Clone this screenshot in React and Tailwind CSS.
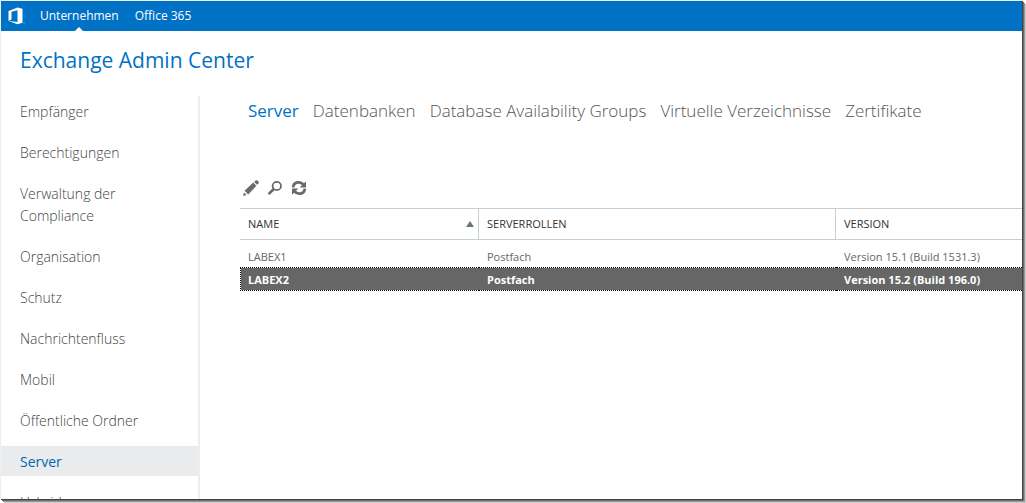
const navItems = [
  "Empfänger",
  "Berechtigungen",
  "Verwaltung der Compliance",
  "Organisation",
  "Schutz",
  "Nachrichtenfluss",
  "Mobil",
  "Öffentliche Ordner",
  "Server",
  "Hybrid",
];

const tabs = [
  "Server",
  "Datenbanken",
  "Database Availability Groups",
  "Virtuelle Verzeichnisse",
  "Zertifikate",
];

const servers = [
  { name: "LABEX1", role: "Postfach", version: "Version 15.1 (Build 1531.3)" },
  { name: "LABEX2", role: "Postfach", version: "Version 15.2 (Build 196.0)" },
];

const OfficeLogo = () => (
  <svg width="17" height="18" viewBox="0 0 17 18" aria-hidden="true">
    <path
      fill="#fff"
      d="M0.5 4 L9.5 0.5 L14.5 1.8 V15.8 L9.5 17.3 L0.5 14 L9.5 15 V3.3 L3.5 4.8 V12.6 L0.5 14 Z"
    />
    <rect x="15.5" y="15.5" width="1" height="1" fill="#9cc9ea" />
  </svg>
);

const PencilIcon = () => (
  <svg width="16" height="16" viewBox="0 0 16 16" fill="#6a6a6a" aria-hidden="true">
    <path d="M0 16 L1 12.4 L3.6 15 Z" />
    <path d="M1.6 10.8 L10.2 2.6 L13.4 5.8 L5.2 14.4 Z" />
    <path d="M11.2 2 L12.2 0.8 Q13.2 -0.3 14.4 0.5 L15.5 1.6 Q16.3 2.8 15.2 3.8 L14 4.8 Z" />
  </svg>
);

const SearchIcon = () => (
  <svg width="16" height="16" viewBox="0 0 16 16" fill="none" stroke="#6a6a6a" aria-hidden="true">
    <circle cx="9.8" cy="6" r="4.2" strokeWidth="1.8" />
    <path d="M6.8 9 L1.6 14.2" strokeWidth="2.6" />
  </svg>
);

const RefreshIcon = () => (
  <svg width="16" height="16" viewBox="0 0 16 16" aria-hidden="true">
    <g fill="none" stroke="#6a6a6a" strokeWidth="2.8">
      <path d="M2.2 7.4 C2.6 1.6 9.5 1 12.4 4.6" />
      <path d="M13.8 8.6 C13.4 14.4 6.5 15 3.6 11.4" />
    </g>
    <path fill="#6a6a6a" d="M15 1.2 V7.4 H8.6 Z M1 14.8 V8.6 H7.4 Z" />
  </svg>
);

const TopBar = () => (
  <header className="flex h-[30px] shrink-0 items-center bg-[#0072c6] pl-[7px] text-[12px] text-white">
    <OfficeLogo />
    <nav className="ml-[15px] flex h-full gap-4">
      <a href="#unternehmen" className="relative flex items-center">
        Unternehmen
        <span className="absolute bottom-0 left-1/2 -translate-x-1/2 border-x-4 border-b-4 border-x-transparent border-b-white" />
      </a>
      <a href="#office365" className="flex items-center">
        Office 365
      </a>
    </nav>
  </header>
);

const Sidebar = () => (
  <nav className="flex w-[199px] shrink-0 flex-col gap-[11px] border-r-2 border-[#ededed] text-[14px] leading-[22px] font-light text-[#444]">
    {navItems.map((item) => (
      <a
        key={item}
        href={`#${item}`}
        className={`pt-[5px] pr-12 pb-[3px] pl-[19px] ${
          item === "Server" ? "bg-[#e9ebed] font-normal text-[#0067b0]" : ""
        }`}
      >
        {item}
      </a>
    ))}
  </nav>
);

const ServerTable = () => (
  <table className="w-full table-fixed border-separate border-spacing-0 text-left text-[11px]">
    <thead className="text-[#333]">
      <tr className="h-8">
        <th className="w-[239px] border-y border-r border-[#c8cdd1] px-2 font-normal">
          <div className="flex items-center justify-between">
            NAME
            <span className="-mr-1 border-x-4 border-b-[6px] border-x-transparent border-b-[#667a69]" />
          </div>
        </th>
        <th className="w-[357px] border-y border-r border-[#c8cdd1] px-2 font-normal">SERVERROLLEN</th>
        <th className="border-y border-[#c8cdd1] px-2 font-normal">VERSION</th>
      </tr>
    </thead>
    <tbody className="text-[#666] before:block before:h-[5px]">
      {servers.map(({ name, role, version }) => (
        <tr
          key={name}
          className={
            name === "LABEX2"
              ? "h-6 font-bold text-white *:border-y *:border-dotted *:border-black *:bg-[#666] *:bg-clip-padding *:first:border-l *:first:pl-[7px]"
              : "h-[22px]"
          }
        >
          <td className="px-2 pt-0.5">{name}</td>
          <td className="px-2 pt-0.5">{role}</td>
          <td className="px-2 pt-0.5">{version}</td>
        </tr>
      ))}
    </tbody>
  </table>
);

export default function App() {
  return (
    <div className="h-screen overflow-hidden bg-white pr-1 pb-1 font-['Open_Sans','Noto_Sans',sans-serif]">
      <div className="flex h-full flex-col overflow-hidden border-t border-l border-[#eee] bg-white shadow-[1px_1px_0_#444,2px_2px_0_#6a6a6a,3px_3px_0_#999,4px_4px_0_#ccc]">
        <TopBar />
        <h1 className="flex h-[65px] shrink-0 items-center pb-[5px] pl-[19px] text-[21px] text-[#0072c6]">
          Exchange Admin Center
        </h1>
        <div className="flex min-h-0 flex-1">
          <Sidebar />
          <main className="min-w-0 flex-1 pl-10">
            <nav className="flex h-[30px] items-center gap-3.5 pl-2 text-[17px] font-light whitespace-nowrap text-[#555]">
              {tabs.map((tab) => (
                <a key={tab} href={`#${tab}`} className={tab === "Server" ? "font-normal text-[#0072c6]" : ""}>
                  {tab}
                </a>
              ))}
            </nav>
            <div className="mt-[54px] mb-3 flex gap-2 pl-[3px]">
              <button type="button" aria-label="Bearbeiten">
                <PencilIcon />
              </button>
              <button type="button" aria-label="Suchen">
                <SearchIcon />
              </button>
              <button type="button" aria-label="Aktualisieren">
                <RefreshIcon />
              </button>
            </div>
            <ServerTable />
          </main>
        </div>
      </div>
    </div>
  );
}
